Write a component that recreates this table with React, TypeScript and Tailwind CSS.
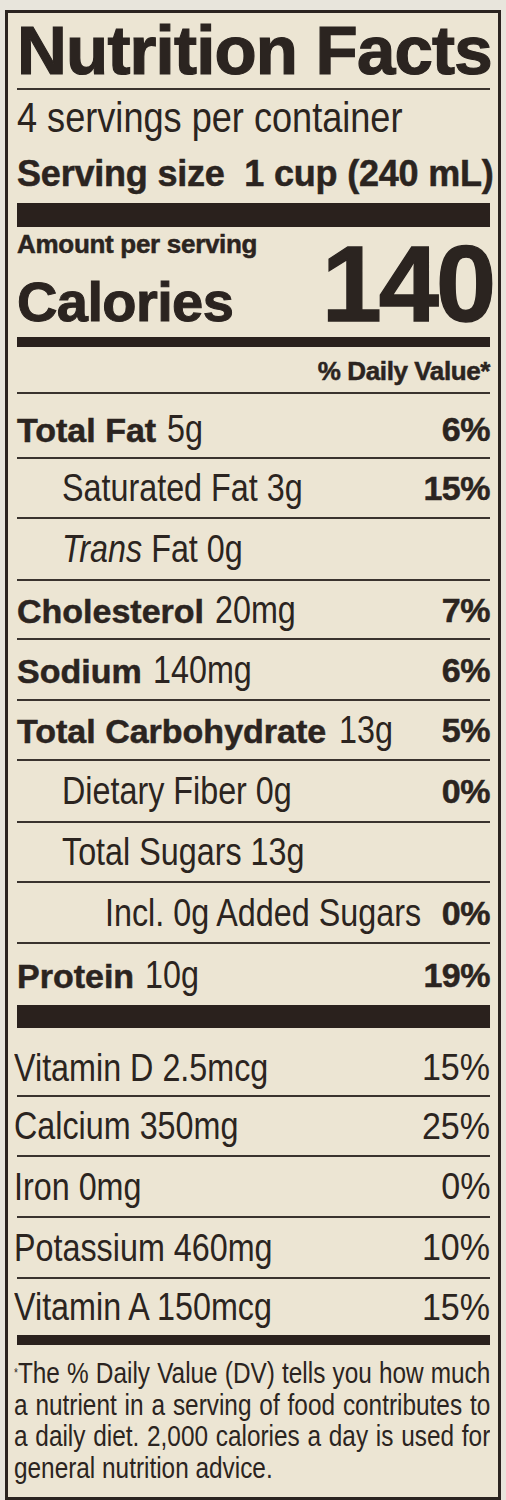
import type { ReactNode } from "react";

const bold = "font-['Liberation_Sans',Arial,sans-serif] font-bold [-webkit-text-stroke:0.5px_#2b2420]";
const reg = "font-['Liberation_Sans',Arial,sans-serif] font-normal";

function Row({
  h,
  pct,
  pctBold = true,
  line = true,
  className = "",
  children,
}: {
  h: string;
  pct?: string;
  pctBold?: boolean;
  line?: boolean;
  className?: string;
  children: ReactNode;
}) {
  return (
    <div
      className={`flex items-center justify-between ${h} ${className} ${
        line ? "border-b-2 border-[#3a332e]" : ""
      }`}
    >
      <div className="flex min-w-0 flex-1 items-baseline whitespace-nowrap">{children}</div>
      {pct && (
        <span
          className={
            pctBold
              ? `${bold} shrink-0 text-[34px] leading-none tracking-[-0.5px]`
              : `${reg} inline-block shrink-0 origin-right scale-x-[0.92] text-[37px] leading-none`
          }
        >
          {pct}
        </span>
      )}
    </div>
  );
}

const Label = ({ children }: { children: ReactNode }) => (
  <span className={`${bold} text-[34px] leading-none`}>{children}</span>
);

const Amt = ({ children, className = "" }: { children: ReactNode; className?: string }) => (
  <span className={`${reg} inline-block origin-left scale-x-[0.85] text-[38px] leading-none ${className}`}>
    {children}
  </span>
);

export default function App() {
  return (
    <div className="min-h-[1500px] bg-[#e8e5dc] pl-[5px] pt-[10px]">
      <div className="w-[496px] overflow-hidden border-[3px] border-[#2b2420] bg-[#ece5d3] pl-[9px] pr-[8px] text-[#2b2420]">
        {/* header */}
        <h1
          className={`${bold} mt-[3px] mb-[3px] h-[69px] whitespace-nowrap text-[69px] leading-[69px] tracking-[-0.8px] [-webkit-text-stroke:1.2px_#2b2420]`}
        >
          Nutrition Facts
        </h1>
        <div className="h-[2px] bg-[#3a332e]" />
        <p className={`${reg} h-[55px] whitespace-nowrap text-[43px] leading-[55px]`}>
          <span className="inline-block origin-left scale-x-[0.84]">4 servings per container</span>
        </p>
        <p className={`${bold} h-[58px] whitespace-nowrap text-[36px] leading-[58px] tracking-[-0.2px]`}>
          Serving size&nbsp; 1 cup (240 mL)
        </p>
        <div className="h-[24px] bg-[#2a211d]" />

        {/* calories */}
        <div className="flex h-[110px] items-end justify-between pb-[7px]">
          <div className="flex flex-col">
            <span className={`${bold} mt-[4px] text-[26px] leading-[26px] tracking-[-0.3px]`}>Amount per serving</span>
            <span className={`${bold} mt-[17px] text-[56px] leading-[56px] tracking-[-0.6px] [-webkit-text-stroke:1px_#2b2420]`}>
              Calories
            </span>
          </div>
          <span className={`${bold} -mr-[3px] text-[108px] leading-[92px] tracking-[-3px] [-webkit-text-stroke:1.4px_#2b2420]`}>
            140
          </span>
        </div>
        <div className="h-[10px] bg-[#2a211d]" />
        <div className={`${bold} h-[45px] text-right text-[26px] leading-[48px] tracking-[-0.4px]`}>% Daily Value*</div>
        <div className="h-[2px] bg-[#3a332e]" />

        {/* nutrients */}
        <Row h="h-[65px]" className="pt-[6px]" pct="6%">
          <Label>Total Fat</Label>
          <Amt className="ml-[11px]">5g</Amt>
        </Row>
        <Row h="h-[60px]" pct="15%">
          <Amt className="ml-[45px]">Saturated Fat 3g</Amt>
        </Row>
        <Row h="h-[62px]">
          <Amt className="ml-[45px]">
            <i>Trans</i> Fat 0g
          </Amt>
        </Row>
        <Row h="h-[59px]" pct="7%">
          <Label>Cholesterol</Label>
          <Amt className="ml-[11px]">20mg</Amt>
        </Row>
        <Row h="h-[61px]" pct="6%">
          <Label>Sodium</Label>
          <Amt className="ml-[11px]">140mg</Amt>
        </Row>
        <Row h="h-[60px]" pct="5%">
          <Label>Total Carbohydrate</Label>
          <Amt className="ml-[13px]">13g</Amt>
        </Row>
        <Row h="h-[62px]" pct="0%">
          <Amt className="ml-[45px]">Dietary Fiber 0g</Amt>
        </Row>
        <Row h="h-[60px]">
          <Amt className="ml-[45px]">Total Sugars 13g</Amt>
        </Row>
        <Row h="h-[61px]" pct="0%">
          <Amt className="ml-[88px]">Incl. 0g Added Sugars</Amt>
        </Row>
        <Row h="h-[61px]" pct="19%" line={false}>
          <Label>Protein</Label>
          <Amt className="ml-[11px]">10g</Amt>
        </Row>
        <div className="h-[23px] bg-[#2a211d]" />

        {/* vitamins & minerals */}
        <Row h="h-[69px]" className="pt-[12px]" pct="15%" pctBold={false}>
          <Amt className="-ml-[3px]">Vitamin D 2.5mcg</Amt>
        </Row>
        <Row h="h-[60px]" pct="25%" pctBold={false}>
          <Amt className="-ml-[3px]">Calcium 350mg</Amt>
        </Row>
        <Row h="h-[61px]" pct="0%" pctBold={false}>
          <Amt className="-ml-[3px]">Iron 0mg</Amt>
        </Row>
        <Row h="h-[61px]" pct="10%" pctBold={false}>
          <Amt className="-ml-[3px]">Potassium 460mg</Amt>
        </Row>
        <Row h="h-[56px]" pct="15%" pctBold={false} line={false}>
          <Amt className="-ml-[3px]">Vitamin A 150mcg</Amt>
        </Row>
        <div className="h-[10px] bg-[#2a211d]" />

        {/* footnote */}
        <div className="-ml-[3px] overflow-hidden pt-[13px] pb-[12px]">
          <div className={`${reg} w-[567px] origin-left scale-x-[0.84] text-[29px] leading-[31.7px]`}>
            <span className="block text-justify [text-align-last:justify]">
              <sup className="text-[12px]">*</sup>The % Daily Value (DV) tells you how much
            </span>
            <span className="block text-justify [text-align-last:justify]">a nutrient in a serving of food contributes to</span>
            <span className="block text-justify [text-align-last:justify]">a daily diet. 2,000 calories a day is used for</span>
            <span className="block">general nutrition advice.</span>
          </div>
        </div>
      </div>
    </div>
  );
}
